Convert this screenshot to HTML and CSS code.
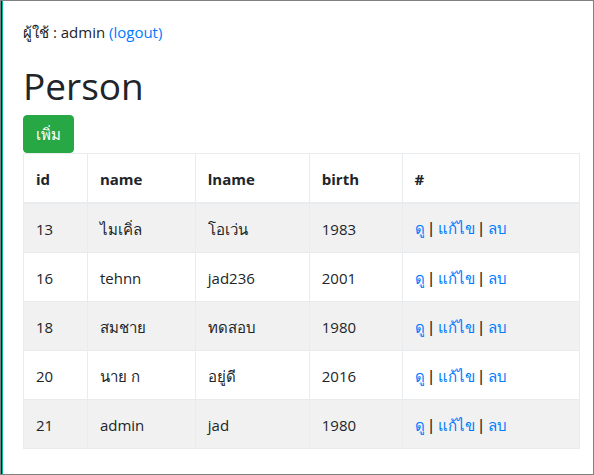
FILE: index.html
```html
<!DOCTYPE html>
<html lang="th">
<head>
  <meta charset="utf-8">
  <title>Person</title>
  <link rel="stylesheet" href="styles.css">
</head>
<body>
  <main class="page">
    <p class="user">ผู้ใช้ : admin <a href="#logout">(logout)</a></p>
    <h1 class="title">Person</h1>
    <button type="button" class="add">เพิ่ม</button>
    <table class="people">
      <colgroup>
        <col class="col-id"><col class="col-name"><col class="col-lname"><col class="col-birth"><col>
      </colgroup>
      <thead>
        <tr><th>id</th><th>name</th><th>lname</th><th>birth</th><th>#</th></tr>
      </thead>
      <tbody>
        <tr><td>13</td><td>ไมเคิ่ล</td><td>โอเว่น</td><td>1983</td><td class="actions"><a href="#view">ดู</a> | <a href="#edit">แก้ไข</a> | <a href="#delete">ลบ</a></td></tr>
        <tr><td>16</td><td>tehnn</td><td>jad236</td><td>2001</td><td class="actions"><a href="#view">ดู</a> | <a href="#edit">แก้ไข</a> | <a href="#delete">ลบ</a></td></tr>
        <tr><td>18</td><td>สมชาย</td><td>ทดสอบ</td><td>1980</td><td class="actions"><a href="#view">ดู</a> | <a href="#edit">แก้ไข</a> | <a href="#delete">ลบ</a></td></tr>
        <tr><td>20</td><td>นาย ก</td><td>อยู่ดี</td><td>2016</td><td class="actions"><a href="#view">ดู</a> | <a href="#edit">แก้ไข</a> | <a href="#delete">ลบ</a></td></tr>
        <tr><td>21</td><td>admin</td><td>jad</td><td>1980</td><td class="actions"><a href="#view">ดู</a> | <a href="#edit">แก้ไข</a> | <a href="#delete">ลบ</a></td></tr>
      </tbody>
    </table>
  </main>
</body>
</html>
```
FILE: styles.css
```css
* {
  box-sizing: border-box;
}

body {
  margin: 0;
  background: #fff;
  color: #212529;
  font-family: "Open Sans", "Noto Sans", sans-serif;
  font-size: 15px;
  line-height: 24px;
}

.page {
  min-height: 100vh;
  padding: 19px 13px 20px 22px;
  border: 1px solid #808080;
  box-shadow: inset 1px 0 #1e1e1e, inset 2px 0 #00b894;
}

a {
  color: #007bff;
  text-decoration: none;
}

.user {
  margin: 0 0 18px;
}

.title {
  margin: 0 0 5px;
  font-size: 37px;
  font-weight: 400;
  line-height: 48px;
}

.add {
  display: block;
  height: 38px;
  padding: 6px 12px;
  border: 1px solid #28a745;
  border-radius: 4px;
  background: #28a745;
  color: #fff;
  font: inherit;
}

.people {
  width: 100%;
  border-collapse: collapse;
  table-layout: fixed;
}

.col-id {
  width: 11.5%;
}

.col-name {
  width: 19.4%;
}

.col-lname {
  width: 20.5%;
}

.col-birth {
  width: 16.7%;
}

.people th,
.people td {
  height: 49px;
  padding: 10px 12px 8px;
  border: 1px solid #e9ecef;
  text-align: left;
  vertical-align: middle;
}

.people th {
  border-bottom-width: 2px;
  font-weight: 700;
}

/* The first row also holds half of the thicker header line. */
.people tbody tr:first-child td {
  height: 50px;
}

.people .actions {
  font-family: "Liberation Sans", sans-serif;
  font-size: 16px;
}

.actions a {
  font-family: "Open Sans", "Noto Sans", sans-serif;
  font-size: 15px;
}

.people tbody tr:nth-child(odd) {
  background: #f1f1f1;
}
```
